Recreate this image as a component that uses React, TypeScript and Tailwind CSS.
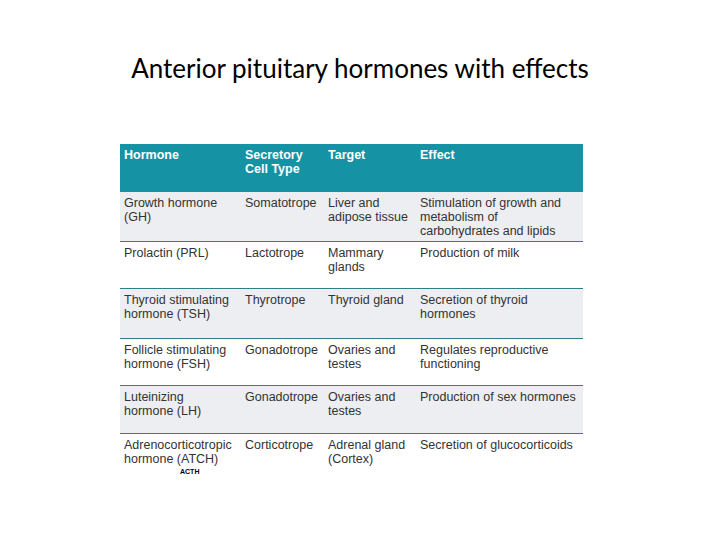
const rows = [
  { h: "Growth hormone (GH)", c: "Somatotrope", t: "Liver and adipose tissue", e: "Stimulation of growth and metabolism of carbohydrates and lipids", gray: true, height: "h-[50px]" },
  { h: "Prolactin (PRL)", c: "Lactotrope", t: "Mammary glands", e: "Production of milk", gray: false, height: "h-[47px]" },
  { h: "Thyroid stimulating hormone (TSH)", c: "Thyrotrope", t: "Thyroid gland", e: "Secretion of thyroid hormones", gray: true, height: "h-[50px]" },
  { h: "Follicle stimulating hormone (FSH)", c: "Gonadotrope", t: "Ovaries and testes", e: "Regulates reproductive functioning", gray: false, height: "h-[47px]" },
  { h: "Luteinizing hormone (LH)", c: "Gonadotrope", t: "Ovaries and testes", e: "Production of sex hormones", gray: true, height: "h-[48px]" },
  { h: "Adrenocorticotropic hormone (ATCH)", c: "Corticotrope", t: "Adrenal gland (Cortex)", e: "Secretion of glucocorticoids", gray: false, height: "h-[48px]" },
];

const cols = "grid grid-cols-[121px_83px_92px_1fr]";

export default function App() {
  return (
    <div className="w-[720px] h-[540px] bg-white flex flex-col" style={{ fontFamily: "Lato, 'Open Sans', sans-serif" }}>
      <h1 className="mt-[52px] text-center text-[26px] leading-[32px] text-black">
        Anterior pituitary hormones with effects
      </h1>

      <div
        className="mt-[60px] ml-[120px] w-[463px] text-[12.5px] leading-[14px] text-[#333]"
        style={{ fontFamily: "'Liberation Sans', Arial, sans-serif" }}
      >
        <div className={`${cols} h-[48px] bg-[#1592a3] text-white font-bold pt-[4px] pl-[4px]`}>
          <div>Hormone</div>
          <div>Secretory<br />Cell Type</div>
          <div>Target</div>
          <div>Effect</div>
        </div>

        {rows.map((r, i) => (
          <div
            key={r.h}
            className={`${cols} ${r.height} pt-[4px] pl-[4px] ${r.gray ? "bg-[#eceef1]" : "bg-white"} ${i < rows.length - 1 ? "border-b border-[#2f7f8b]" : ""}`}
          >
            <div className="pr-[10px]">
              {r.h}
              {i === rows.length - 1 && (
                <div className="text-[7px] leading-[8px] font-bold text-black ml-[56px] mt-[2px]">ACTH</div>
              )}
            </div>
            <div>{r.c}</div>
            <div className="pr-1">{r.t}</div>
            <div className="pr-1">{r.e}</div>
          </div>
        ))}
      </div>
    </div>
  );
}
